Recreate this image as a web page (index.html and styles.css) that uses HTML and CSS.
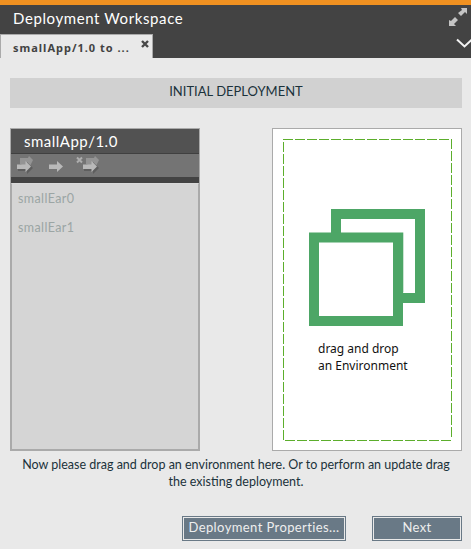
FILE: index.html
```html
<!DOCTYPE html>
<html lang="en">
<head>
<meta charset="utf-8">
<title>Deployment Workspace</title>
<link rel="stylesheet" href="styles.css">
</head>
<body>
<header class="top">
  <div class="titlebar">
    <h1 class="title"><span>Deployment Workspace</span></h1>
    <svg class="expand" width="20" height="20" viewBox="0 0 20 20"><path fill="#c4c4c4" d="M12 2h6v6l-2-2-4 4-3-3 4-3zM0 14l2 1 4-4 3 3-4 4 2 2H0z"/></svg>
  </div>
  <div class="tabs">
    <div class="tab"><span class="tab-name">smallApp/1.0 to ...</span><svg class="close" width="8" height="8" viewBox="0 0 8 8"><path d="M1 1l6 6M7 1L1 7" stroke="#484848" stroke-width="2.4"/></svg></div>
    <svg class="chevron" width="17" height="11" viewBox="0 0 17 11"><path d="M1 1.5l7.5 7L16 1.5" fill="none" stroke="#f2f2f2" stroke-width="2"/></svg>
  </div>
</header>
<main class="main">
  <div class="banner"><span>INITIAL DEPLOYMENT</span></div>
  <div class="columns">
    <section class="app">
      <h2 class="app-name"><span>smallApp/1.0</span></h2>
      <div class="tools">
        <svg width="90" height="23" viewBox="0 0 90 23">
          <g id="arrows"><path fill="#949494" d="M9 4h8l1-2 4 4-4 8-9-4z"/><path fill="#5e5e5e" d="M7 12h9V8l6 6-6 6v-3H7z"/><path fill="#b9b9b9" d="M6 10.5h8.500V7l5.500 5.500-5.500 5.500V15H6z"/></g>
          <path fill="#b9b9b9" d="M38 10.500h8V7l6 5.500-6 5.500V15h-8z"/>
          <use href="#arrows" x="66"/>
          <path d="M66 3.500l5 5M71 3.500l-5 5" stroke="#adadad" stroke-width="2"/>
        </svg>
      </div>
      <ul class="ears"><li>smallEar0</li><li>smallEar1</li></ul>
    </section>
    <section class="drop">
      <svg class="dashes" width="169" height="302" viewBox="0 0 169 302">
        <g fill="none" stroke="#5cae2c" stroke-dasharray="10 2"><path d="M0 .5h168"/><path d="M.5 3v298"/><path d="M168.500 0v299"/><path d="M2 301.500h166"/></g>
        <g fill="none" stroke="#4da666" stroke-width="10"><path d="M53 75h84v84H53z"/><path fill="#fff" d="M31 98.500h84v83.500H31z"/></g>
        <path d="M120.500 93.500v60" stroke="#cbe5d2"/>
      </svg>
      <p class="hint"><span class="h1">drag and drop</span><br><span class="h2">an Environment</span></p>
    </section>
  </div>
  <p class="message"><span class="m1">Now please drag and drop an environment here. Or to perform an update drag</span><br><span class="m2">the existing deployment.</span></p>
  <div class="actions"><button class="props">Deployment Properties...</button><button class="next">Next</button></div>
</main>
</body>
</html>
```
FILE: styles.css
```css
* { box-sizing: border-box; margin: 0; padding: 0; }
body { width: 471px; height: 549px; overflow: hidden; background: #e9e9e9; font-family: Lato, "Noto Sans", sans-serif; color: #1b323b; }
svg { display: block; }
.top { height: 58px; background: #434343; border-top: 5px solid #f09121; box-shadow: inset 0 1px #434343; }
.titlebar { height: 29px; display: flex; justify-content: space-between; padding: 0 2px 0 13px; }
.title { font-size: 15px; font-weight: 400; line-height: 26px; letter-spacing: .6px; color: #fff; }
.expand { margin-top: 1px; }
.tabs { height: 24px; display: flex; justify-content: space-between; }
.tab { width: 153px; height: 24px; background: #e9e9e9; border: 1px solid #aaa; border-bottom: 0; padding: 0 3px 0 12px; display: flex; justify-content: space-between; }
.tab-name { font: 700 11px/25px "Noto Sans", sans-serif; letter-spacing: 1px; color: #424242; white-space: nowrap; }
.close { margin-top: 5px; }
.chevron { margin-top: 4px; margin-right: -2px; }
.main { padding: 20px 9px 0 10px; }
.banner { height: 30px; background: #d1d1d1; text-align: center; font-size: 13px; line-height: 27px; }
.columns { display: flex; justify-content: space-between; margin-top: 20px; }
.app { width: 190px; height: 323px; background: #d5d5d5; border: 1px solid #aaa; display: flex; flex-direction: column; }
.app-name { height: 25px; background: #525252; border-bottom: 1px solid #404040; color: #fff; font-size: 15px; font-weight: 400; line-height: 24px; padding-left: 13px; letter-spacing: .5px; }
.tools { height: 29px; background: #747474; border-bottom: 6px solid #434343; }
.ears { flex: 1; list-style: none; border: 1px solid #aaa; border-top-color: #d9d9d9; padding: 0 6px; font-size: 12.500px; line-height: 29px; letter-spacing: .4px; color: #9ba5a4; }
.drop { width: 190px; height: 323px; background: #fff; border: 1px solid #aaa; padding: 10px; position: relative; }
.hint { position: absolute; left: 45px; top: 211px; font: 12px/17px "Noto Sans", sans-serif; color: #111; white-space: nowrap; }
.message { margin-top: 5px; text-align: center; font-size: 12.500px; line-height: 17px; white-space: nowrap; }
.actions { display: flex; justify-content: flex-end; gap: 26px; margin-top: 26px; }
.actions button { height: 25px; border: 1px solid #697986; background: #697986; box-shadow: inset 0 0 0 1px #e9e9e9; color: #eee; font: 13px/19px Lato, sans-serif; padding-bottom: 3px; letter-spacing: .4px; white-space: nowrap; }
.props { width: 164px; }
.next { width: 90px; }
```
